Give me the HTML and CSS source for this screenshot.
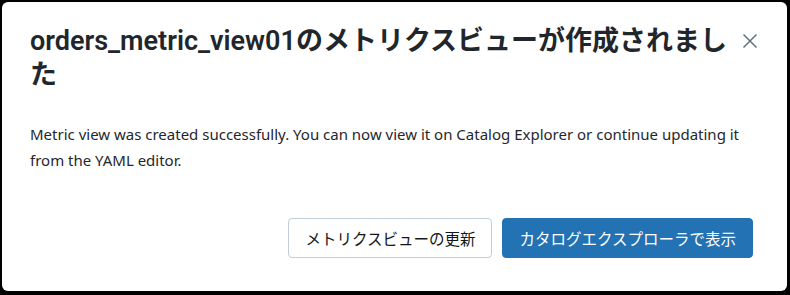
FILE: index.html
```html
<!DOCTYPE html>
<html lang="ja">
<head>
    <meta charset="UTF-8">
    <title>Metric view created</title>
    <link rel="stylesheet" href="styles.css">
</head>
<body>
    <div class="dialog">
        <div class="dialog-header">
            <h2 class="dialog-title">orders_metric_view01のメトリクスビューが作成されました</h2>
            <button class="close-btn" aria-label="閉じる">
                <svg width="16" height="16" viewBox="0 0 16 16">
                    <path d="M1.5 1.5 L14.5 14.5 M14.5 1.5 L1.5 14.5" stroke="#5f7281" stroke-width="1.5" fill="none"/>
                </svg>
            </button>
        </div>

        <p class="dialog-text">Metric view was created successfully. You can now view it on Catalog Explorer or continue updating it from the YAML editor.</p>

        <div class="dialog-footer">
            <button class="btn">メトリクスビューの更新</button>
            <button class="btn primary">カタログエクスプローラで表示</button>
        </div>
    </div>
</body>
</html>
```

FILE: styles.css
```css
body {
    margin: 0;
    background-color: #000;
    font-family: "Noto Sans", "Noto Sans CJK JP", sans-serif;
    color: #11171c;
}

.dialog {
    background-color: #fff;
    margin: 2px 3px 0 2px;
    height: 289px;
    border-radius: 6px;
    padding: 0 28px;
    box-sizing: border-box;
    display: flex;
    flex-direction: column;
}

.dialog-header {
    display: flex;
    align-items: flex-start;
    gap: 12px;
    padding-top: 22px;
}

.dialog-title {
    flex: 1;
    margin: 0;
    font-family: "Roboto", "Noto Sans CJK JP", sans-serif;
    font-size: 27px;
    font-weight: 600;
    line-height: 34px;
    color: #1f272d;
}

.close-btn {
    border: none;
    background: none;
    padding: 0;
    margin-top: 9px;
    margin-right: 1px;
    cursor: pointer;
    display: flex;
}

.dialog-text {
    margin: 29px 0 0;
    font-size: 15px;
    line-height: 26px;
    color: #1f272d;
}

.dialog-footer {
    display: flex;
    justify-content: flex-end;
    gap: 10px;
    margin-top: 45px;
    padding-right: 6px;
}

.btn {
    height: 40px;
    padding: 0 16px;
    font-family: inherit;
    font-size: 15.5px;
    border: 1px solid #c0cdd8;
    border-radius: 4px;
    background-color: #fff;
    color: #11171c;
    cursor: pointer;
}

.btn.primary {
    background-color: #2272b4;
    border-color: #2272b4;
    color: #fff;
}
```
